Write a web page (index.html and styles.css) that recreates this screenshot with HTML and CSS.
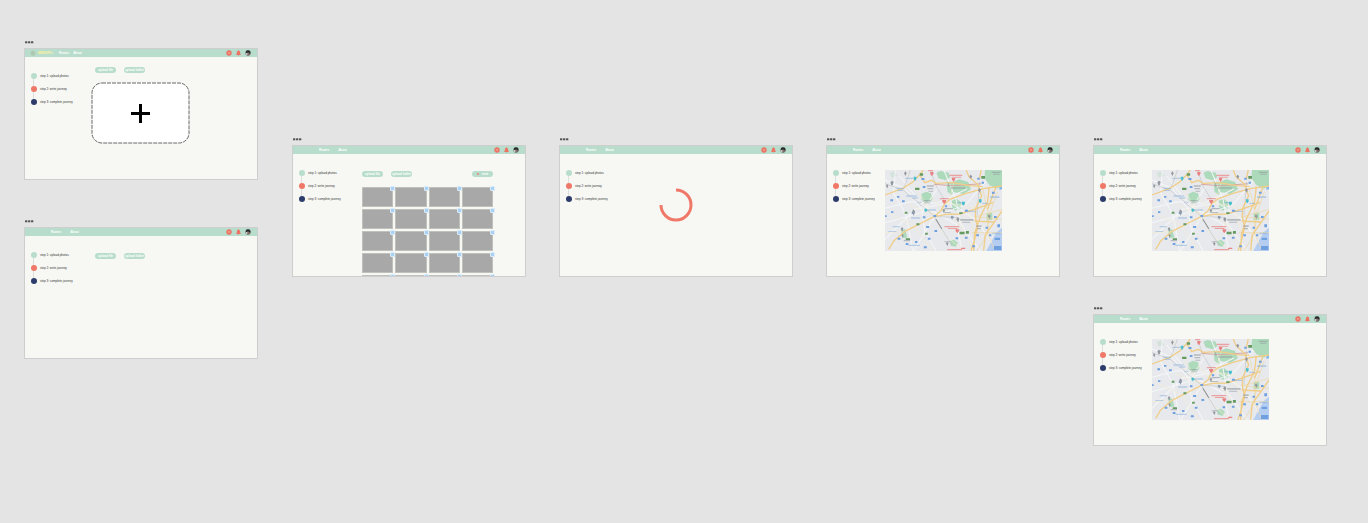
FILE: index.html
```html
<!DOCTYPE html>
<html lang="en">
<head>
<meta charset="utf-8">
<title>Journey boards</title>
<link rel="stylesheet" href="styles.css">
</head>
<body>
<svg class="sprite" aria-hidden="true">
  <filter id="soften" x="0" y="0" width="1" height="1"><feGaussianBlur stdDeviation="1.500"/></filter>
  <symbol id="compass" viewBox="0 0 18 18">
    <circle cx="9" cy="9" r="8" fill="#ea6f60"/><path d="M5 6l4 2 4-2M5 12l3-2 5 2" fill="none" stroke="#f3b3a2" stroke-width="2"/>
  </symbol>
  <symbol id="bell" viewBox="0 0 15 18">
    <path d="M7.500 1a2 2 0 0 1 2 2c3 1 3 4 3 7l2 4v1H.5v-1l2-4c0-3 0-6 3-7a2 2 0 0 1 2-2z" fill="#ec7464"/><path d="M5.500 16h4l-2 2z" fill="#ec7464"/>
  </symbol>
  <symbol id="avatar" viewBox="0 0 18 18">
    <circle cx="9" cy="9" r="8" fill="#6f6a68"/><path d="M5 1.500h8l3 4v6l-5-4-5 1-3 2V5z" fill="#262b2d"/><path d="M2 10l5-2 1 5-2 3-3-2z" fill="#c9d3d0"/><path d="M8 9h5l-1 6-4 1z" fill="#8a6960"/>
  </symbol>
  <symbol id="dots" viewBox="0 0 27 9">
    <g fill="#555"><rect x="0" y="1" width="7" height="6" rx="1"/><rect x="9" y="1" width="7" height="6" rx="1"/><rect x="18" y="1" width="7" height="6" rx="1"/></g>
  </symbol>
  <symbol id="logo" viewBox="0 0 18 18">
    <path d="M2 6l3-3 4-2 4 2 3 3v10H2z" fill="#b5cfb4"/><path d="M3 7h12M4 11h10M5 15h8" stroke="#9fc3aa" stroke-width="2"/>
  </symbol>
  <symbol id="map" viewBox="14 12 350 243" preserveAspectRatio="none">
    <rect x="14" y="12" width="350" height="243" fill="#e7e9ed"/>
    <g filter="url(#soften)">
    <g fill="#acdabb">
      <path d="M123 84l14-7 14 5 6 15-8 13-17 2-9-12z"/>
      <path d="M168 20l12-5 25 5 4 14-13 9-22-6z"/>
      <path d="M198 45l18 4 20-9 27 8 8 22-22 14-30-6-6 9-12-10z"/>
      <path d="M313 12h51v49l-16 7-22-11-14-20z"/>
      <path d="M214 104l14-6 14 11-2 20-17 5-8-11z"/>
      <path d="M318 141h17v20l-17 2z"/><path d="M208 225l12-4 12 9-6 12-15-3z"/><path d="M61 193l13-3 7 24-12 3z"/><path d="M28 20l15-4 8 13-17 6z" fill="#d4e2db"/>
    </g>
    <path d="M357 62l7-4v12l-8 2z" fill="#86b6ef"/>
    <path d="M364 185l-16 14-10 17-21 39h47z" fill="#b4cdf1"/>
    <g fill="none" stroke="#f5f6f7" stroke-width="3">
      <path d="M14 42l60 25 50 65 8 60 35 63M45 12l-5 70 37 65 20 108M14 127l75-20 80 5 90-43M14 170l110-30 50-78M14 220l90-90 105-20 75 50 50 70M100 255l62-104 94-35 60-70M190 12l37 90 12 70 60 83M245 255l-17-80-100-55-70-90"/>
    </g>
    <g fill="none" stroke="#f4ecd0" stroke-width="2">
      <path d="M75 12l30 54 57 85M100 90l65 60-80-35M162 151l28 52 58 52M198 111l88 14M175 120l67 60 38 75M151 92l49 52M30 145l69 33 57 77M262 125l21 83M14 200l58-3 85-46M220 50l-18 67M296 108l-80 88"/>
      <path d="M305 65l18 75-3 65-31 50M350 78l-24 68-5 58 23 51M364 130l-79 22M364 160l-79-8M364 200l-90 0" stroke="#efd8a2"/>
    </g>
    <g fill="none" stroke="#b6b9bd" stroke-width="1.500">
      <path d="M150 12l17 48 29 49M162 151l18 32 35 56M14 53l55 20 92 77M297 48l-8 100M162 151l74 4M90 12l-20 58"/>
      <path d="M166 160l18 28" stroke="#8f9296" stroke-width="3"/>
      <path d="M160 55l57 4 84-6" stroke="#d6aaa2" stroke-width="3"/>
    </g>
    <g fill="none" stroke="#f0cd88" stroke-width="4">
      <path d="M14 87l53-20 30-19 22-23 9-13M25 250l15-25 34-29 49-25 39-20 36-6 40-1 52-17 48-18"/>
      <path d="M162 151l20-17 10-20 18-15 44-16 54-15 56-8M119 28l14 22 20-7 14 9 49-2 51 9 39 2M257 12l8 20 26 23 12 35-18 37-1 25 7 32-10 41-10 29M326 62l-5 45-23 48-16 47-3 53M345 65l-24 65M302 12l-6 28M364 135l-30 43-20 28-5 48M282 165l57 3"/>
    </g>
    <g fill="#6e9fdf">
      <path d="M30 100h8v6h-8zM65 103h8v6h-8zM50 90h7v5h-7zM94 138h8v6h-8zM127 151h8v6h-8zM32 136h7v5h-7zM14 148h5v5h-5zM52 215h8v6h-8zM76 231h8v6h-8zM104 225h7v6h-7zM130 241h9v6h-9zM142 215h8v6h-8zM162 192h8v6h-8zM137 180h9v6h-9zM123 36h9v6h-9zM127 60h8v6h-8zM253 131h9v6h-9zM211 151h8v6h-8zM225 214h8v6h-8zM253 212h8v6h-8zM287 205h8v6h-8zM303 47h7v6h-7zM290 35h7v6h-7zM334 77h8v6h-8zM340 150h8v6h-8zM315 182h7v6h-7zM325 205h7v6h-7zM275 238h8v6h-8zM159 147h8v6h-8zM342 215h16v7h-16zM350 175h8v9h-8zM340 240h22v12h-22zM193 118h7v6h-7z"/>
    </g>
    <g fill="#84add9" opacity=".5">
      <path d="M48 65h22v4H48zM52 71h15v4H52zM78 88h31v4H78zM96 94h17v4H96zM92 154h27v4H92zM37 180h21v4H37zM24 195h24v3H24zM84 236h34v4H84zM110 107h14v3h-14zM230 108h16v4h-16zM260 134h24v4h-24zM305 110h17v4h-17zM328 91h28v5h-28zM75 35h24v4H75zM135 130h31v4h-31zM335 200h24v5h-24z"/>
    </g>
    <g fill="#659b61">
      <path d="M104 65h13v7h-13zM118 22h10v7h-10zM73 137h8v6h-8zM108 172h9v6h-9zM134 200h8v6h-8zM237 197h15v8h-15zM256 195h9v8h-9zM236 139h10v5h-10zM76 217h13v5H76zM302 30h11v8h-11z"/>
    </g>
    <g fill="#93999e">
      <path d="M139 58h21v4h-21zM141 66h17v4h-17zM144 74h14v3h-14zM129 102h21v4h-21zM131 109h17v3h-17zM210 64h44v4h-44zM203 51h4v11h-4zM239 159h40v5h-40zM245 167h24v3h-24zM287 178h16v5h-16zM289 186h12v4h-12zM333 17h27v4h-27zM337 23h20v3h-20zM192 126h25v4h-25zM189 138h22v3h-22zM70 222h19v4H70zM192 226h16v3h-16z" opacity=".6"/>
      <path d="M35 44l5 4-3 10-4 0-3-9zM20 54l4 5-3 8-4-7zM98 130l6 5-4 15-5-12zM65 183l4 5-3 9-5-9zM66 204l4 4-3 9-4-9zM190 128l4 4-4 9-4-9zM214 149l4 4-3 8-4-8zM231 154l6 4-4 11-6-9zM200 228l4 4-3 8-5-8zM297 66l4 5-4 9-5-8zM270 26l5 5-4 9-5-9zM325 145l5 5-3 9-6-9zM75 16l4 5-4 9-4-8z"/>
    </g>
    <g fill="#e98180">
      <path d="M207 26h38v4h-38zM213 32h29v3h-29zM178 96h27v4h-27zM192 180h44v4h-44zM202 186h29v3h-29zM143 12h15v4h-15zM200 249h45v4h-45z" opacity=".7"/>
      <path d="M214 36h10v4l-5 8-5-8zM185 102h12v4l-6 9-6-9zM225 190h11v4l-6 8-5-8zM150 18h9v5l-5 8-5-8zM242 245h12v4h-12z"/>
    </g>
    <g fill="#48bfce"><path d="M100 32h8v7l-4 6-4-6zM132 128h8v6l-4 5-4-5zM244 107h9v7l-5 5-4-5zM295 100h8v7l-4 5-4-5z"/></g>
    </g>
  </symbol>
</svg>

<main class="canvas">
  <section class="board board--upload">
    <svg class="board__dots"><use href="#dots"/></svg>
    <div class="frame">
      <header class="bar bar--brand">
        <svg class="icon"><use href="#logo"/></svg><strong class="brand">MEMORY+</strong>
        <nav class="nav nav--tight"><a href="#">Routes</a><a href="#">About</a></nav>
        <div class="tools"><svg class="icon"><use href="#compass"/></svg><svg class="icon icon--bell"><use href="#bell"/></svg><svg class="icon"><use href="#avatar"/></svg></div>
      </header>
      <div class="body">
        <ol class="steps"><li>step 1: upload photos</li><li>step 2: write journey</li><li>step 3: complete journey</li></ol>
        <div class="content content--drop">
          <div class="actions"><button>upload file</button><button>upload folder</button></div>
          <button class="drop" aria-label="Add photos"><svg class="drop__shape"><rect class="drop__line" x="1" y="1" rx="10"/></svg><svg class="plus" viewBox="0 0 19 19"><path d="M9.500 0v19M0 9.500h19"/></svg></button>
        </div>
      </div>
    </div>
  </section>

  <section class="board board--empty">
    <svg class="board__dots"><use href="#dots"/></svg>
    <div class="frame">
      <header class="bar">
        <nav class="nav"><a href="#">Routes</a><a href="#">About</a></nav>
        <div class="tools"><svg class="icon"><use href="#compass"/></svg><svg class="icon icon--bell"><use href="#bell"/></svg><svg class="icon"><use href="#avatar"/></svg></div>
      </header>
      <div class="body">
        <ol class="steps"><li>step 1: upload photos</li><li>step 2: write journey</li><li>step 3: complete journey</li></ol>
        <div class="content"><div class="actions"><button>upload file</button><button>upload folder</button></div></div>
      </div>
    </div>
  </section>

  <section class="board board--gallery">
    <svg class="board__dots"><use href="#dots"/></svg>
    <div class="frame">
      <header class="bar">
        <nav class="nav"><a href="#">Routes</a><a href="#">About</a></nav>
        <div class="tools"><svg class="icon"><use href="#compass"/></svg><svg class="icon icon--bell"><use href="#bell"/></svg><svg class="icon"><use href="#avatar"/></svg></div>
      </header>
      <div class="body">
        <ol class="steps"><li>step 1: upload photos</li><li>step 2: write journey</li><li>step 3: complete journey</li></ol>
        <div class="content content--gallery">
          <div class="actions"><button>upload file</button><button>upload folder</button><button class="next"><i></i>next</button></div>
          <div class="gallery"><div></div><div></div><div></div><div></div><div></div><div></div><div></div><div></div><div></div><div></div><div></div><div></div><div></div><div></div><div></div><div></div><div></div><div></div><div></div><div></div></div>
        </div>
      </div>
    </div>
  </section>

  <section class="board board--loading">
    <svg class="board__dots"><use href="#dots"/></svg>
    <div class="frame">
      <header class="bar">
        <nav class="nav"><a href="#">Routes</a><a href="#">About</a></nav>
        <div class="tools"><svg class="icon"><use href="#compass"/></svg><svg class="icon icon--bell"><use href="#bell"/></svg><svg class="icon"><use href="#avatar"/></svg></div>
      </header>
      <div class="body">
        <ol class="steps"><li>step 1: upload photos</li><li>step 2: write journey</li><li>step 3: complete journey</li></ol>
        <div class="content content--center"><svg class="spinner" viewBox="0 0 34 34"><path d="M17 2a15 15 0 1 1-15 15"/></svg></div>
      </div>
    </div>
  </section>

  <section class="board board--map-a">
    <svg class="board__dots"><use href="#dots"/></svg>
    <div class="frame">
      <header class="bar">
        <nav class="nav"><a href="#">Routes</a><a href="#">About</a></nav>
        <div class="tools"><svg class="icon"><use href="#compass"/></svg><svg class="icon icon--bell"><use href="#bell"/></svg><svg class="icon"><use href="#avatar"/></svg></div>
      </header>
      <div class="body">
        <ol class="steps"><li>step 1: upload photos</li><li>step 2: write journey</li><li>step 3: complete journey</li></ol>
        <div class="content content--map"><svg class="map"><use href="#map"/></svg></div>
      </div>
    </div>
  </section>

  <section class="board board--map-b">
    <svg class="board__dots"><use href="#dots"/></svg>
    <div class="frame">
      <header class="bar">
        <nav class="nav"><a href="#">Routes</a><a href="#">About</a></nav>
        <div class="tools"><svg class="icon"><use href="#compass"/></svg><svg class="icon icon--bell"><use href="#bell"/></svg><svg class="icon"><use href="#avatar"/></svg></div>
      </header>
      <div class="body">
        <ol class="steps"><li>step 1: upload photos</li><li>step 2: write journey</li><li>step 3: complete journey</li></ol>
        <div class="content content--map"><svg class="map"><use href="#map"/></svg></div>
      </div>
    </div>
  </section>

  <section class="board board--map-c">
    <svg class="board__dots"><use href="#dots"/></svg>
    <div class="frame">
      <header class="bar">
        <nav class="nav"><a href="#">Routes</a><a href="#">About</a></nav>
        <div class="tools"><svg class="icon"><use href="#compass"/></svg><svg class="icon icon--bell"><use href="#bell"/></svg><svg class="icon"><use href="#avatar"/></svg></div>
      </header>
      <div class="body">
        <ol class="steps"><li>step 1: upload photos</li><li>step 2: write journey</li><li>step 3: complete journey</li></ol>
        <div class="content content--map"><svg class="map"><use href="#map"/></svg></div>
      </div>
    </div>
  </section>
</main>
</body>
</html>
```

FILE: styles.css
```css
* { box-sizing: border-box; }

body {
  margin: 0;
  background: #e4e4e4;
  font: 3px/4px "Liberation Sans", Arial, sans-serif;
  color: #333;
}

.sprite { position: absolute; width: 0; height: 0; }

.canvas { position: relative; min-height: 100vh; overflow: hidden; }

/* Boards are placed freely on the canvas */
.board { position: absolute; width: 234px; }
.board--upload { left: 24px; top: 41px; }
.board--empty { left: 24px; top: 220px; }
.board--gallery { left: 292px; top: 138px; }
.board--loading { left: 559px; top: 138px; }
.board--map-a { left: 826px; top: 138px; }
.board--map-b { left: 1093px; top: 138px; }
.board--map-c { left: 1093px; top: 307px; }

.board__dots { display: block; width: 9px; height: 3px; margin: 0 0 4px 1px; }

.frame {
  display: flex;
  flex-direction: column;
  height: 132px;
  border: 1px solid #cdcecd;
  background: #f7f8f3;
  overflow: hidden;
}

.bar {
  flex: none;
  display: flex;
  align-items: center;
  height: 8px;
  padding: 0 6px 0 26px;
  background: #b8ddcc;
}
.bar--brand { padding-left: 5px; }
.brand { width: 16px; margin: 0 5px 0 2px; color: #fff3a0; }

.nav { display: flex; gap: 9px; }
.nav--tight { gap: 4px; }
.nav a { color: #fff; font-weight: bold; text-decoration: none; }

.tools { display: flex; align-items: center; gap: 4px; margin-left: auto; }
.icon { flex: none; width: 6px; height: 6px; }
.icon--bell { width: 5px; }

.body { flex: 1; min-height: 0; display: flex; }

.steps {
  flex: none;
  display: flex;
  flex-direction: column;
  gap: 7px;
  width: 50px;
  margin: 0;
  padding: 16px 0 0 6px;
  list-style: none;
  white-space: nowrap;
}
.steps li { position: relative; display: flex; align-items: center; gap: 3px; height: 6px; }
.steps li::before { content: ""; width: 6px; height: 6px; border-radius: 50%; background: #b8ddcc; }
.steps li:nth-child(2)::before { background: #ef7868; }
.steps li:nth-child(3)::before { background: #2d3c6b; }
.steps li:not(:last-child)::after {
  content: "";
  position: absolute;
  left: 2px;
  top: 6px;
  width: 1px;
  height: 7px;
  background: #dcdfda;
}

.content { flex: 1; min-width: 0; padding-top: 17px; padding-right: 50px; }
.content--drop { padding-top: 10px; padding-right: 52px; }
.content--gallery { flex: none; width: 150px; padding: 17px 0 0 19px; }
.content--center { display: flex; justify-content: center; padding-top: 34px; }
.content--map { display: flex; justify-content: center; padding-top: 16px; }

.actions { display: flex; gap: 8px; padding-left: 20px; }
.content--gallery .actions { padding-left: 0; }
.actions button {
  display: flex;
  align-items: center;
  justify-content: center;
  width: 21px;
  height: 6px;
  padding: 0;
  border: 0;
  border-radius: 3px;
  background: #b8ddcc;
  color: #fff;
  font: bold 3px/4px "Liberation Sans", Arial, sans-serif;
  white-space: nowrap;
}
.actions .next { gap: 3px; margin-left: auto; }
.next i { width: 2px; height: 2px; background: #dc9a88; }

.drop {
  display: grid;
  place-items: center;
  width: 99px;
  height: 62px;
  margin: 9px auto 0;
  padding: 0;
  border: 0;
  background: transparent;
}
.drop > svg { grid-area: 1 / 1; }
.drop__shape { width: 100%; height: 100%; }
.drop__line {
  width: calc(100% - 2px);
  height: calc(100% - 2px);
  fill: #fff;
  stroke: #686868;
  stroke-dasharray: 4 1;
}
.plus { width: 19px; height: 19px; stroke: #000; stroke-width: 3; }

.gallery {
  display: grid;
  grid-template-columns: repeat(4, 1fr);
  grid-auto-rows: 20px;
  gap: 2px;
  margin-top: 10px;
}
.gallery div { position: relative; border: 1px solid #bfc1bd; background: #a8a8a8; }
.gallery div::after {
  content: "";
  position: absolute;
  right: -3px;
  top: -2px;
  width: 3px;
  height: 3px;
  border: 1px solid #dcebf8;
  border-radius: 1px;
  background: #a9d1f3;
}

.spinner { width: 34px; height: 34px; fill: none; stroke: #ef7868; stroke-width: 3; }
.map { flex: none; width: 117px; height: 81px; }
```
